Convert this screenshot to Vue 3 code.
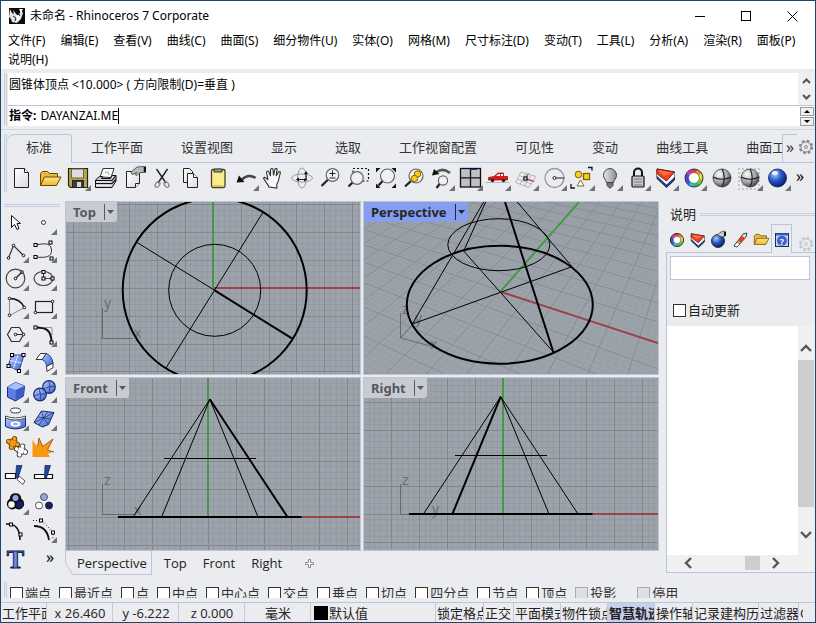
<script setup>
import { ref } from 'vue'

const menus = ['文件(F)', '编辑(E)', '查看(V)', '曲线(C)', '曲面(S)', '细分物件(U)', '实体(O)', '网格(M)', '尺寸标注(D)', '变动(T)', '工具(L)', '分析(A)', '渲染(R)', '面板(P)', '说明(H)']
const tabs = ['标准', '工作平面', '设置视图', '显示', '选取', '工作视窗配置', '可见性', '变动', '曲线工具', '曲面工具']
const command = ref('DAYANZAI.ME')
const helpQuery = ref('')
const autoUpdate = ref(false)

/* Icon artwork, drawn on a 28 x 28 cell */
const sq = (x, y) => `<rect x="${x - 1.5}" y="${y - 1.5}" width="3" height="3" fill="#fff" stroke="#000"/>`
const dot = (x, y) => `<circle cx="${x}" cy="${y}" r="1.3" fill="#fff" stroke="#111"/>`
const lens = (x, y, r, hx, hy) => `<path d="M${x - r * 0.7} ${y + r * 0.7}L${hx} ${hy}" stroke="#222" stroke-width="2.2"/><circle cx="${x}" cy="${y}" r="${r}" fill="#f0f1f4" stroke="#666" stroke-width="1.2"/>`
const wheelColors = ['#f03030', '#f58a20', '#f0e020', '#70d020', '#20c060', '#20c8d8', '#2060e0', '#7030d8', '#d030b8']
const wheel = (r, w) => wheelColors.map((c, i) => {
  const a = (i * 40 - 110) * Math.PI / 180
  const b = ((i + 1) * 40 - 108) * Math.PI / 180
  return `<path d="M${14 + r * Math.cos(a)} ${14 + r * Math.sin(a)}A${r} ${r} 0 0 1 ${14 + r * Math.cos(b)} ${14 + r * Math.sin(b)}" fill="none" stroke="${c}" stroke-width="${w}"/>`
}).join('') + `<circle cx="14" cy="14" r="${r + w / 2}" fill="none" stroke="#333" stroke-width="1"/><circle cx="14" cy="14" r="${r - w / 2}" fill="#fff" stroke="#555" stroke-width=".7"/>`
const layers = '<path d="M5 5L22.500 8v8l-8 7.500L5 14.500z" fill="#1c4494" stroke="#1a1a2a"/><path d="M5 9.500l9.500 7.500L22.500 8v5l-8 7.500L5 12z" fill="#f6f8ff"/><path d="M5 5L22.500 8l-8 9L5 10z" fill="#f04418" stroke="#7a1808" stroke-width=".8"/><path d="M6 6l14 2.500-8 3.500z" fill="#ff7040"/>'
const sphere = '<circle cx="14" cy="14" r="9" fill="url(#grayBall)" stroke="#444" stroke-width=".8"/><path d="M14 5c3 5 3 13 0 18M5 13c5 3 13 3 18 0" fill="none" stroke="#222" stroke-width="1.200"/>'
const folder = '<path d="M4.500 21.500v-12l2-2h5l2 2h8v4" fill="#e8b93a" stroke="#6b4a00"/><path d="M4.500 21.500l4-8.500h16.500l-4.500 8.500z" fill="url(#gold)" stroke="#6b4a00"/>'
const puzzle = (x, y, fill, line) => {
  const knobs = [[0, -4.5], [4.5, 0], [0, 4.5], [-4.5, 0]].map(([a, b]) => `<circle cx="${a}" cy="${b}" r="1.9"/>`).join('')
  return `<g transform="translate(${x} ${y}) rotate(20)" fill="${fill}"><g stroke="${line}" stroke-width="1.6">${knobs}<rect x="-2.800" y="-2.800" width="5.600" height="5.600"/></g>${knobs}<rect x="-2.800" y="-2.800" width="5.600" height="5.600"/></g>`
}
const tip = '<path d="M27 21v6h-6z" fill="#70747a"/>'

const art = {
  new: '<path d="M6.500 4.500h10l4 4v15h-14z" fill="url(#paper)" stroke="#222"/><path d="M16.500 4.500v4h4" fill="#fff" stroke="#222"/>',
  open: folder,
  save: '<path d="M4.500 4.500h19v19h-17l-2-2z" fill="#b9a654" stroke="#2a2508" stroke-width="1.200"/><rect x="7.500" y="5" width="12" height="9" fill="#dcdde2" stroke="#6f6535"/><rect x="8.500" y="16.500" width="11" height="7" fill="#3c3c3c" stroke="#222"/><rect x="13" y="18" width="4" height="5" fill="#d7d7dc"/>',
  print: '<path d="M8 13l3-8.500h11l-3 9z" fill="#fafafa" stroke="#333"/><path d="M13 9q3-3 4 2" stroke="#999" fill="none"/><path d="M3.500 16l4-3.500h3l-1 2h9l1.500-3h4v5.500l-4 6.500H3.500z" fill="#c8c9cd" stroke="#111"/><path d="M3.500 16.500h16.500l4-5M3.500 19.500h16.500l4-4" fill="none" stroke="#111" stroke-width="1.200"/><path d="M4 18h15M4 21.500h15" stroke="#eee"/>',
  props: '<path d="M6.500 7.500h13v12l-4 4h-9z" fill="url(#paper)" stroke="#222"/><path d="M19.500 19.500h-4v4" fill="#fff" stroke="#222"/><path d="M11 8l6-5 7-.5v6h-4l-3 3-2-1 2-2-5 2z" fill="#b9babd" stroke="#444" stroke-width=".8"/><path d="M24 2.500h2v6h-2z" fill="#111"/>',
  cut: '<path d="M8.500 5L18 19M19.500 5L10 19" stroke="#222" stroke-width="1.400"/><ellipse cx="9.500" cy="20.500" rx="2" ry="3" transform="rotate(35 9.500 20.500)" fill="none" stroke="#888" stroke-width="1.300"/><ellipse cx="18.500" cy="20.500" rx="2" ry="3" transform="rotate(-35 18.500 20.500)" fill="none" stroke="#888" stroke-width="1.300"/>',
  copy: '<path d="M7.500 4.500h6l3 3v11h-9z" fill="url(#paper)" stroke="#222"/><path d="M11.500 9.500h6l4 4v10h-10z" fill="url(#paper)" stroke="#222"/><path d="M17.500 9.500v4h4" fill="#fff" stroke="#222"/>',
  paste: '<rect x="7.500" y="5.500" width="13.500" height="18" rx="1.500" fill="#f8ec8c" stroke="#4c4210" stroke-width="1.300"/><path d="M10 5h8v3h-8z" fill="#9c9ca0" stroke="#333"/><path d="M9 21.500h10" stroke="#d8c860"/>',
  undo: '<path d="M9 16.500Q16 9 23.500 14" fill="none" stroke="#444" stroke-width="2.600"/><path d="M4.500 18.500L7 11.500l5.500 6.500z" fill="#111"/>',
  pan: '<path d="M9 23c-1-3-5-7-5.500-9 1-1.500 3 0 4.500 2L6.500 8c1-1.500 2-1 2.500 0l1.500 4V5.500c1-1.500 2.500-1 2.500 0l.5 6 1.500-6.500c1-1 2.500-.5 2 .7L16.200 12 18.500 8c1.200-1 2.200 0 1.800 1.200-1.500 4-1 8-3.500 11V24z" fill="#f7f7f9" stroke="#333" stroke-width="1.100"/>',
  rotate: '<ellipse cx="14" cy="14" rx="10.500" ry="4" fill="none" stroke="#999"/><ellipse cx="14" cy="14" rx="4.500" ry="10" fill="none" stroke="#999"/><path d="M10 15.500h6M18 9.500v6" stroke="#222" stroke-width="1.200"/><path d="M16 10l2-3 2 3zM11 13.500v4l-3-2zM16 14.500l3.500 1-3.500 2z" fill="#111"/>',
  zoom: lens(16.5, 11, 6.3, 5.5, 22) + '<path d="M16.500 6.500v6M13.500 9.500h6M13.500 14h6" stroke="#222"/>',
  window: '<rect x="9" y="4.500" width="15.500" height="12.500" fill="none" stroke="#111" stroke-width="1.200" stroke-dasharray="2 2"/>' + lens(13, 14, 6.3, 4.5, 22.5),
  extents: '<path d="M4 8.500V4h4.500zM24 8.500V4h-4.500zM4 19.500V24h4.500zM24 19.500V24h-4.500z" fill="#111"/>' + lens(15.5, 12, 7, 6.5, 21.5),
  selected: lens(16, 12, 7, 5, 22.5) + '<circle cx="17.500" cy="10" r="3.200" fill="#f5d020" stroke="#7a6200"/><circle cx="14.500" cy="14.500" r="3.200" fill="#f5d020" stroke="#7a6200"/>',
  undoview: '<path d="M8 8.500Q15 3 22 9" fill="none" stroke="#555" stroke-width="2.800"/><path d="M4 11.500L6 5l5.500 5z" fill="#111"/>' + lens(15, 16.5, 4.6, 8.5, 24),
  viewports: '<rect x="4.500" y="4.500" width="20" height="18.500" fill="#bfc0c4" stroke="#111" stroke-width="1.300"/><path d="M14.500 4.500V23M4.500 13.800h20" stroke="#111" stroke-width="1.300"/><path d="M15 5.500h6" stroke="#2030d0"/>',
  car: '<path d="M1.500 18.500h24" stroke="#b8b9bc"/><path d="M4.500 16v-2.500l5.500-1 4-3.500h5.500v3.500h4V16z" fill="#e01818" stroke="#900" stroke-width=".7"/><path d="M12 12l2.500-2h1.500v2zM17 10h2v2h-2z" fill="#fff"/><circle cx="8.500" cy="16.500" r="1.700" fill="#222"/><circle cx="19.500" cy="16.500" r="1.700" fill="#222"/>',
  cplane: '<path d="M9 8l15 4.500M7 11.500L22 17M5 15l15 5M3.500 18.500L17 23.500M9 8L3.500 18.500M14 9.500L8 20.500M19 11l-6.500 11M24 12.500L17 23.500" stroke="#b4b6ba" fill="none"/><path d="M14 15l8 2.500" stroke="#d02020" stroke-width="1.200"/><path d="M14 14l2.500-4.500" stroke="#20a030" stroke-width="1.200"/><rect x="12" y="13" width="3" height="3" fill="#fff" stroke="#111" stroke-width="1.200"/>',
  circle: '<circle cx="14.500" cy="14" r="9.500" fill="none" stroke="#96989d" stroke-width="1.300"/><path d="M14.500 14h10" stroke="#222"/><circle cx="14.500" cy="14" r="1.500" fill="#fff" stroke="#222"/>',
  select: '<path d="M20 3.500h4v3M3 20v4h4" fill="none" stroke="#111" stroke-width="1.300"/><circle cx="10.500" cy="10.500" r="3.300" fill="#f5d020" stroke="#806000"/><rect x="15.500" y="9.500" width="6" height="6" fill="#f5d020" stroke="#806000" stroke-width="1.300"/><path d="M12.500 16l3.500 6H9z" fill="#fff" stroke="#8a6428"/>',
  bulb: '<path d="M14 4.500a6.800 6.800 0 0 0-6.500 7c0 3 2.500 4 3 7h7c.5-3 3-4 3-7a6.800 6.800 0 0 0-6.500-7z" fill="url(#metal)" stroke="#444"/><path d="M11 18.500h6v3l-3 3-3-3z" fill="#777" stroke="#333" stroke-width=".8"/>',
  lock: '<path d="M10 12V8.500a4 4 0 0 1 8 0V12" fill="none" stroke="#111" stroke-width="2"/><rect x="8" y="12" width="12" height="11" rx="1" fill="#c6c7ca" stroke="#111" stroke-width="1.200"/><path d="M10 15h8M10 18h8M10 21h8" stroke="#777"/>',
  layer: layers,
  color: wheel(7.2, 3.6),
  shaded: sphere,
  rendered: '<path d="M2 5h24M2 9h24M2 13h24M2 17h24M2 21h24M2 25h24" stroke="#c4c5ca" stroke-width="2" stroke-dasharray="2 2"/>' + sphere,
  blueball: '<circle cx="13.500" cy="14" r="9" fill="url(#blueBall)" stroke="#0a1c60" stroke-width=".8"/><ellipse cx="11" cy="9" rx="3" ry="2" fill="#e8f0ff"/>',
  /* side tools */
  pointer: '<path d="M9.500 7.500v12l3-3 2.500 5 2-1-2-5h3.500z" fill="#fff" stroke="#111"/>',
  point: '<circle cx="13.500" cy="14.500" r="2" fill="#fff" stroke="#333"/>',
  polyline: '<path d="M6.500 22L11.500 9.500l10 10" fill="none" stroke="#333" stroke-width="1.200"/>' + dot(6.5, 22) + dot(11.5, 9.5) + dot(21.5, 19.5),
  curve: '<path d="M5.500 9C16 7 21 7 21.500 14S16 22 5.500 21" fill="none" stroke="#333"/>' + sq(5.5, 9) + sq(20.5, 6.5) + sq(5.5, 21) + sq(21.5, 22.5),
  circ: '<circle cx="13.500" cy="14.500" r="9.300" fill="none" stroke="#444" stroke-width="1.200"/><path d="M13.500 14.500l6.500-6.500" stroke="#222" stroke-width="1.300"/>' + dot(13.5, 14.5) + dot(20, 8),
  ellipse: '<ellipse cx="13.500" cy="14.500" rx="9.500" ry="7" fill="none" stroke="#444" stroke-width="1.200"/><path d="M13.500 8v6.500H23" fill="none" stroke="#444"/>' + sq(13.5, 8) + sq(13.5, 14.5) + sq(22.5, 14.5),
  arc: '<path d="M7.500 6.500Q18 6.500 22.500 15.500L7.500 23.500z" fill="none" stroke="#888"/><path d="M7.500 6.500Q18 6.500 22.500 15.500" fill="none" stroke="#111" stroke-width="1.300"/>' + dot(7.5, 6.5) + dot(22.3, 15.5) + dot(7.5, 23.3),
  rect: '<rect x="5.500" y="9.500" width="17" height="11" fill="none" stroke="#222" stroke-width="1.200"/>' + dot(22.5, 9.5) + dot(5.5, 20.5),
  hexagon: '<path d="M5.500 14.500l4-7h8l4 7-4 7h-8z" fill="none" stroke="#333" stroke-width="1.200"/><path d="M13.500 14.500h8" stroke="#222"/>' + dot(13.5, 14.5) + dot(21.5, 14.5),
  fillet: '<path d="M14 7.500h8v8" fill="none" stroke="#999"/><path d="M5.500 7.500c10 0 16 2 16 15" fill="none" stroke="#111" stroke-width="2"/>' + sq(5.5, 7.5) + sq(21.5, 22.5),
  patch: '<path d="M10 7h12l-5 16-11-5z" fill="url(#blueFace)" stroke="#223c90"/><path d="M16 7l-4.500 13.500M8 12.500L19.500 15" stroke="#dfe8ff"/>' + sq(10, 7) + sq(21.5, 7) + sq(17, 23) + sq(6.5, 18),
  extrudesrf: '<path d="M6 11.500L10.500 5.500h6L12 11.500z" fill="#fff" stroke="#333"/><path d="M12 11.500l4.500-6Q22 8 23 15l-6.500 3.500Q16.500 13.500 12 11.500z" fill="url(#blueFace)" stroke="#223c90"/><path d="M16.500 18.500L23 15v4.500l-6 4z" fill="#fff" stroke="#333"/>',
  box: '<path d="M5.500 11l8-4.500 9 3.500-1 10-8 5-8-4z" fill="#5b80e0" stroke="#1a2f80"/><path d="M5.500 11l8-4.500 9 3.500-8.500 4z" fill="#a9bfff"/><path d="M14 14l-.5 11 8-5 1-10z" fill="#3a5cc4"/>',
  spheres: '<circle cx="19" cy="11" r="6.300" fill="url(#blueFace)" stroke="#142a70" stroke-width="1.200"/><circle cx="10" cy="18.500" r="6.300" fill="url(#blueFace)" stroke="#142a70" stroke-width="1.200"/><path d="M14 13q5-3 10.500-3M19 5q2 6 0 12M4 20q6-3 11-2M9 13q3 6 1 12" fill="none" stroke="#142a70" stroke-width=".7"/>',
  tube: '<ellipse cx="13.500" cy="6.500" rx="5" ry="2.500" fill="#fff" stroke="#333"/><path d="M3.500 12.500q10 4 20 0v10q-10 5-20 0z" fill="url(#blueFace)" stroke="#142a70"/><path d="M3.500 12q10 4 20 0v2q-10 4-20 0z" fill="#fff" stroke="#333" stroke-width=".8"/><ellipse cx="13.500" cy="20" rx="5" ry="2.800" fill="#fff"/><ellipse cx="13.500" cy="20" rx="2.500" ry="1.200" fill="#90a8f0"/>',
  mesh: '<path d="M4 18.500L11.500 7l12.500 1.500-5.500 12-6 2.500z" fill="url(#blueFace)" stroke="#142a70"/><path d="M8 13l13 2M17.500 8L9 21M4 18.500l9.500-4.500 10.500-5.500M11.500 7l2 7 5 6.500" fill="none" stroke="#142a70" stroke-width=".7"/>',
  join: puzzle(11, 11, '#f59a10', '#6a3c00') + puzzle(19, 18.5, '#fff', '#333'),
  explode: '<path d="M2.500 25V8l5 7 1.500-9 4 8.500L23 7l-5.500 11 6.500 2-6 1.500 2 3.500z" fill="#f79a10"/><path d="M7.500 14.500l1.500-8.500 3.500 8.500L23 7l-5.500 11 6.500 2" fill="none" stroke="#9a4408" stroke-width=".8"/>',
  trim: '<path d="M3.500 13.500h10v5h-10z" fill="#fff" stroke="#111" stroke-width="1.200"/><path d="M17 16l6 5-2 3.500-6-5z" fill="#fff" stroke="#555"/><path d="M14.500 5.500h5.500l-4 12.500h-2.500z" fill="#24489c" stroke="#0b1c50" stroke-width=".7"/>',
  split: '<path d="M4.500 14.500h18v4h-18z" fill="#fff" stroke="#111" stroke-width="1.200"/><path d="M15 5.500h5.500l-4 12.500h-2z" fill="#24489c" stroke="#0b1c50" stroke-width=".7"/>',
  group: '<path d="M13.500 6c4 0 5 3 5 5 3 2 3.500 5 2 7.500-2 3-5 2.500-7 1-2 1.500-5 2-7-1-1.500-2.500-1-5.500 2-7.500 0-2 1-5 5-5z" fill="#111" stroke="#111" stroke-width="1.500"/><circle cx="13.500" cy="10" r="3" fill="#92a6e8"/><circle cx="9.500" cy="16.500" r="3.200" fill="#fff"/><circle cx="17.500" cy="16.500" r="3.200" fill="#141c74"/>',
  ungroup: '<circle cx="14" cy="9" r="3.500" fill="#92a6e8" stroke="#555"/><circle cx="9" cy="17.500" r="3.500" fill="#fff" stroke="#555"/><circle cx="19" cy="17.500" r="3.500" fill="#141c74" stroke="#222"/>',
  controlpts: '<path d="M4 8q14-1 14 16" fill="none" stroke="#111" stroke-width="1.600"/>' + sq(9, 8.5) + sq(18.5, 18.5),
  editpts: '<path d="M4 10q13 0 15 14" fill="none" stroke="#111" stroke-width="1.800"/><path d="M3 4.500h9l11 12v6" fill="none" stroke="#111" stroke-dasharray="1 2"/>' + sq(11, 4.5) + sq(23, 16.5),
  text: '<text x="13.500" y="24" text-anchor="middle" font-family="Liberation Serif, serif" font-weight="700" font-size="26" fill="#6c88e8" stroke="#10204c">T</text>',
  /* panel tabs */
  pcolor: wheel(5.2, 2.8),
  player: `<g transform="translate(3.500 4) scale(.75)">${layers}</g>`,
  pball: '<circle cx="13" cy="15" r="6.500" fill="url(#blueBall)" stroke="#334"/><path d="M12 9l4-3 4-1v5l-3 1z" fill="#ccc" stroke="#444" stroke-width=".8"/><path d="M19 6h2v4h-2z" fill="#111"/>',
  pbrush: '<path d="M8 20l9-12 4-1-1 4-9 10z" fill="#ddd" stroke="#444"/><path d="M12 15l4-5 3 2-4 5z" fill="#e04018"/><path d="M8 20l3-4 3 2-3 3z" fill="#fff" stroke="#444" stroke-width=".8"/>',
  pfolder: `<g transform="translate(4 3) scale(.72)">${folder}</g>`,
  phelp: '<rect x="7.500" y="7.500" width="13" height="13" fill="#c4d0f0" stroke="#1b2c60"/><path d="M8 8.500h12" stroke="#3c62d0" stroke-width="2"/><circle cx="14" cy="14.800" r="5" fill="#3c62d0"/><text x="14" y="18.500" text-anchor="middle" font-family="Open Sans, sans-serif" font-size="9" font-weight="700" fill="#fff">?</text>',
}
const plain = new Set(['new', 'open', 'print', 'props', 'cut', 'copy', 'paste', 'pan', 'rotate', 'zoom', 'window', 'extents', 'selected', 'shaded', 'pointer', 'join', 'explode', 'trim', 'split', 'ungroup', 'controlpts', 'text'])
const draw = (name) => art[name] + (plain.has(name) ? '' : tip)

const toolbar = ['new', 'open', 'save', 'print', 'props', 'cut', 'copy', 'paste', 'undo', 'pan', 'rotate', 'zoom', 'window', 'extents', 'selected', 'undoview', 'viewports', 'car', 'cplane', 'circle', 'select', 'bulb', 'lock', 'layer', 'color', 'shaded', 'rendered', 'blueball']
const sideTools = ['pointer', 'point', 'polyline', 'curve', 'circ', 'ellipse', 'arc', 'rect', 'hexagon', 'fillet', 'patch', 'extrudesrf', 'box', 'spheres', 'tube', 'mesh', 'join', 'explode', 'trim', 'split', 'group', 'ungroup', 'controlpts', 'editpts', 'text']
const panelTabs = ['pcolor', 'player', 'pball', 'pbrush', 'pfolder', 'phelp']

/* Construction-plane grids */
const MAJOR = 27.9
function flatGrid(ox, oy) {
  let minor = ''
  let major = ''
  for (let i = -150; i <= 150; i++) {
    const x = Math.round(ox + i * MAJOR / 5) + 0.5
    const y = Math.round(oy + i * MAJOR / 5) + 0.5
    const seg = `M${x} 0V900M0 ${y}H1600`
    if (i % 5 === 0) major += seg
    else minor += seg
  }
  return { minor, major }
}

/* Projective map of the ground plane from four plane/screen pairs */
function homography(pairs) {
  const m = []
  for (const [u, v, x, y] of pairs) {
    m.push([u, v, 1, 0, 0, 0, -u * x, -v * x, x])
    m.push([0, 0, 0, u, v, 1, -u * y, -v * y, y])
  }
  for (let c = 0; c < 8; c++) {
    let p = c
    for (let r = c + 1; r < 8; r++) if (Math.abs(m[r][c]) > Math.abs(m[p][c])) p = r
    ;[m[c], m[p]] = [m[p], m[c]]
    for (let r = 0; r < 8; r++) {
      if (r === c) continue
      const f = m[r][c] / m[c][c]
      for (let k = c; k < 9; k++) m[r][k] -= f * m[c][k]
    }
  }
  return m.map((row, i) => row[8] / row[i])
}
const H = homography([
  [-2.73, 1.64, 99.7, 49],
  [2.84, -1.82, 189.3, 150],
  [1.79, 2.71, 208, 64.7],
  [-1.68, -2.87, 48.3, 122],
])
const depth = (u, v) => H[6] * u + H[7] * v + 1
function project(u, v) {
  const w = depth(u, v)
  return `${((H[0] * u + H[1] * v + H[2]) / w).toFixed(1)} ${((H[3] * u + H[4] * v + H[5]) / w).toFixed(1)}`
}
function planeLine(u0, v0, u1, v1) {
  const near = 0.2
  const a = depth(u0, v0)
  const b = depth(u1, v1)
  if (a < near && b < near) return ''
  const t = (near - a) / (b - a)
  const mid = [u0 + (u1 - u0) * t, v0 + (v1 - v0) * t]
  const p = a < near ? mid : [u0, v0]
  const q = b < near ? mid : [u1, v1]
  return `M${project(...p)}L${project(...q)}`
}
function perspectiveGrid() {
  let minor = ''
  let major = ''
  for (let i = -100; i <= 100; i++) {
    const k = i / 5
    const seg = planeLine(k, -20, k, 20) + planeLine(-20, k, 20, k)
    if (i % 5 === 0) major += seg
    else minor += seg
  }
  return { minor, major }
}

const views = [
  {
    name: 'Top', grid: flatGrid(146.7, 85.7), green: 'M147 86V0', red: 'M147 86H1600',
    thin: 'M70.700 40.300L148.700 88.300M197 10.300L100 166M102.700 88.300a46 46 0 1 0 92 0a46 46 0 1 0-92 0',
    thick: 'M56.700 88.300a92 92 0 1 0 184 0a92 92 0 1 0-184 0M148.700 88.300L226.300 136.700',
    axes: 'M36.500 106v30.500h30', letters: [['y', 38, 106], ['x', 68, 136]],
  },
  {
    name: 'Perspective', active: true, grid: perspectiveGrid(), green: 'M136.300 89.700L215 0', red: 'M136.300 89.700L294 141L900 338',
    thin: 'M48.300 122L208 64.700L153.300 0M99.700 49L189.300 150M48.300 122L119.700 0M99.700 49L121.700 0M83.800 42.700a51 26 0 1 0 102 0a51 26 0 1 0-102 0',
    thick: 'M42.800 102.700a93 59 0 1 0 186 0a93 59 0 1 0-186 0M141 0L189.300 150',
    axes: 'M36.500 111v25l16-18M36.500 136l30 8', letters: [['z', 38, 112], ['y', 51, 121], ['x', 66, 147]],
  },
  {
    name: 'Front', grid: flatGrid(141.7, 138.7), green: 'M142 139V0', red: 'M142 139H1600',
    thin: 'M67 139L143.800 21.300L95.600 139M143.800 21.300L192 139M98 80.500h92',
    thick: 'M143.800 21.300L221.500 139M52 139h183.500',
    axes: 'M36.500 106v30.500h31', letters: [['z', 38, 107], ['x', 68, 137]],
  },
  {
    name: 'Right', grid: flatGrid(138.7, 135.7), green: 'M139 136V0', red: 'M139 136H1600',
    thin: 'M59.400 136L136.700 18.700L185 136M136.700 18.700L214 136M91 77.500h92',
    thick: 'M136.700 18.700L88.400 136M45 136h183.500',
    axes: 'M36.500 106v30.500h31', letters: [['z', 38, 107], ['y', 68, 136]],
  },
]
const viewTabs = ['Perspective', 'Top', 'Front', 'Right']

const snaps = ['端点', '最近点', '点', '中点', '中心点', '交点', '垂点', '切点', '四分点', '节点', '顶点', '投影', '停用']
const isOff = (s) => s === '投影' || s === '停用'

const status = [
  { t: '工作平面', w: 46 }, { t: 'x 26.460', w: 66, mid: true }, { t: 'y -6.222', w: 66, mid: true }, { t: 'z 0.000', w: 66, mid: true },
  { t: '毫米', w: 66, mid: true }, { t: '默认值', swatch: true, grow: true },
  { t: '锁定格点', w: 48 }, { t: '正交', w: 30 }, { t: '平面模式', w: 47 }, { t: '物件锁点', w: 47 },
  { t: '智慧轨迹', w: 47, on: true }, { t: '操作轴', w: 38 }, { t: '记录建构历史', w: 66 }, { t: '过滤器', w: 40 }, { t: 'CPU', w: 4 },
]
</script>

<template>
  <div class="app">
    <svg class="defs" width="0" height="0" aria-hidden="true">
      <defs>
        <linearGradient id="paper" x1="0" y1="0" x2="1" y2="1"><stop offset="0" stop-color="#fff" /><stop offset="1" stop-color="#d9dadf" /></linearGradient>
        <linearGradient id="gold" x1="0" y1="0" x2="0" y2="1"><stop offset="0" stop-color="#ffe88a" /><stop offset="1" stop-color="#f0b428" /></linearGradient>
        <linearGradient id="metal" x1="0" y1="0" x2="1" y2="0"><stop offset="0" stop-color="#e8e8ea" /><stop offset="1" stop-color="#8c8d90" /></linearGradient>
        <linearGradient id="blueFace" x1="0" y1="0" x2="1" y2="1"><stop offset="0" stop-color="#b8caff" /><stop offset="1" stop-color="#3c64cc" /></linearGradient>
        <radialGradient id="grayBall" cx=".35" cy=".3" r=".75"><stop offset="0" stop-color="#fff" /><stop offset=".6" stop-color="#a0a2a6" /><stop offset="1" stop-color="#3c3d40" /></radialGradient>
        <radialGradient id="blueBall" cx=".35" cy=".3" r=".75"><stop offset="0" stop-color="#a8ccff" /><stop offset=".5" stop-color="#2454c8" /><stop offset="1" stop-color="#061a60" /></radialGradient>
      </defs>
    </svg>

    <header class="titlebar">
      <svg class="logo" width="16" height="16" viewBox="0 0 16 16" aria-hidden="true">
        <rect width="16" height="16" fill="#0a0a0a" />
        <path d="M1 1l2 4 2 1-1-4 4 5 2 0 2-5 2 3-2 6-4 4-5-1-1-3-2-2z" fill="#e4e4e4" />
        <path d="M7 8l3-1 1 4-3 2zM10 1l4 0-2 4z" fill="#fff" /><path d="M4 8l3 2-1 3M9 5l2 3" fill="none" stroke="#222" />
        <path d="M12 11l4-3v8h-6z" fill="#0a0a0a" />
      </svg>
      <h1>未命名 - Rhinoceros 7 Corporate</h1>
      <div class="winctl">
        <button aria-label="最小化"><svg width="11" height="11"><path d="M0 5.500h10" stroke="#000" /></svg></button>
        <button aria-label="最大化"><svg width="11" height="11"><rect x=".5" y=".5" width="9" height="9" fill="none" stroke="#000" /></svg></button>
        <button aria-label="关闭"><svg width="11" height="11"><path d="M.5 .5l10 10M10.500 .5l-10 10" stroke="#000" /></svg></button>
      </div>
    </header>

    <nav class="menubar"><button v-for="m in menus" :key="m">{{ m }}</button></nav>

    <section class="commands">
      <div class="grip"></div>
      <div class="lines">
        <div class="history">
          <p>圆锥体顶点 &lt;10.000&gt; ( 方向限制(D)=垂直 )</p>
          <div class="steps">
            <button aria-label="向上"><svg width="9" height="6"><path d="M1 5l3.500-3.500L8 5" fill="none" stroke="#505357" stroke-width="2" /></svg></button>
            <button aria-label="向下"><svg width="9" height="6"><path d="M1 1l3.500 3.500L8 1" fill="none" stroke="#505357" stroke-width="2" /></svg></button>
          </div>
        </div>
        <div class="prompt">
          <label for="cmd">指令:</label>
          <input id="cmd" v-model="command" type="text" spellcheck="false"><i class="caret"></i>
          <div class="spin">
            <button aria-label="上一条"><svg width="6" height="3"><path d="M0 3l3-3 3 3z" /></svg></button>
            <button aria-label="下一条"><svg width="6" height="3"><path d="M0 0l3 3 3-3z" /></svg></button>
          </div>
        </div>
      </div>
    </section>

    <section class="ribbon">
      <div class="grip"></div>
      <div class="ribbon-body">
        <div class="tabs">
          <div class="tablist">
            <button v-for="(t, i) in tabs" :key="t" :class="{ active: i === 0 }">{{ t }}</button>
          </div>
          <button class="more">»</button>
          <button class="gear" aria-label="选项">
            <svg width="16" height="16" viewBox="0 0 16 16"><circle cx="8" cy="8" r="6" fill="none" stroke="#85878c" stroke-width="2.400" stroke-dasharray="2.700 2" /><circle cx="8" cy="8" r="5" fill="#ebecf0" stroke="#85878c" /><circle cx="8" cy="8" r="1.500" fill="none" stroke="#85878c" /></svg>
          </button>
        </div>
        <div class="toolbar">
          <button v-for="n in toolbar" :key="n" :aria-label="n"><svg width="28" height="28" viewBox="0 0 28 28" v-html="draw(n)"></svg></button>
          <button class="more-tools">»</button>
        </div>
      </div>
    </section>

    <main class="main">
      <aside class="side">
        <div class="hgrip"></div>
        <div class="side-grid">
          <button v-for="n in sideTools" :key="n" :aria-label="n"><svg width="28" height="28" viewBox="0 0 28 28" v-html="draw(n)"></svg></button>
          <button class="more-tools">»</button>
        </div>
      </aside>

      <section class="work">
        <div class="viewports">
          <div v-for="v in views" :key="v.name" class="viewport">
            <svg class="scene" width="100%" height="100%">
              <path :d="v.grid.minor" class="minor" :class="{ soft: v.active }" />
              <path :d="v.grid.major" class="major" :class="{ soft: v.active }" />
              <path :d="v.red" class="red" />
              <path :d="v.green" class="green" />
              <path :d="v.axes" class="axes" />
              <text v-for="l in v.letters" :key="l[0]" :x="l[1]" :y="l[2]">{{ l[0] }}</text>
              <path :d="v.thin" class="thin" />
              <path :d="v.thick" class="thick" />
            </svg>
            <button class="vtitle" :class="{ active: v.active }">
              <span>{{ v.name }}</span>
              <svg width="9" height="16"><path d="M.5 0v16" stroke="currentColor" /></svg>
              <svg class="drop" width="7" height="4"><path d="M0 0h7l-3.500 4z" fill="currentColor" /></svg>
            </button>
          </div>
        </div>
        <div class="viewtabs">
          <button v-for="(t, i) in viewTabs" :key="t" :class="{ active: i === 0 }">
            <svg v-if="i === 0" class="slant" width="8" height="24"><path d="M.5 0v12l7 11.500" fill="none" stroke="#bcc4dc" /></svg>{{ t }}
          </button>
          <button class="add" aria-label="新增"><svg width="9" height="9"><path d="M3.500 .5h2v3h3v2h-3v3h-2v-3h-3v-2h3z" fill="#fff" stroke="#888b90" /></svg></button>
        </div>
      </section>

      <aside class="panel">
        <div class="phead"><h2>说明</h2><div class="hgrip"></div></div>
        <div class="ptabs">
          <button v-for="n in panelTabs" :key="n" :aria-label="n" :class="{ active: n === 'phelp' }"><svg width="28" height="28" viewBox="0 0 28 28" v-html="art[n]"></svg></button>
          <svg class="pgear" width="16" height="16" viewBox="0 0 16 16"><circle cx="8" cy="8" r="6" fill="none" stroke="#c3c8d4" stroke-width="2.400" stroke-dasharray="2.700 2" /><circle cx="8" cy="8" r="5" fill="#ebecf0" stroke="#c3c8d4" /><circle cx="8" cy="8" r="1.500" fill="none" stroke="#c3c8d4" /></svg>
        </div>
        <div class="pbody">
          <input v-model="helpQuery" class="query" type="text" aria-label="搜索">
          <label class="auto"><input v-model="autoUpdate" type="checkbox">自动更新</label>
          <div class="browser">
            <div class="paper"></div>
            <div class="vscroll">
              <button aria-label="向上滚动"><svg width="12" height="8"><path d="M1 7l5-5 5 5" fill="none" stroke="#55585c" stroke-width="2.400" /></svg></button>
              <div class="vthumb"></div>
              <button aria-label="向下滚动"><svg width="12" height="8"><path d="M1 1l5 5 5-5" fill="none" stroke="#55585c" stroke-width="2.400" /></svg></button>
            </div>
            <div class="hscroll">
              <button aria-label="向左滚动"><svg width="8" height="12"><path d="M7 1L2 6l5 5" fill="none" stroke="#55585c" stroke-width="2.400" /></svg></button>
              <div class="hthumb"></div>
              <button aria-label="向右滚动"><svg width="8" height="12"><path d="M1 1l5 5-5 5" fill="none" stroke="#55585c" stroke-width="2.400" /></svg></button>
            </div>
          </div>
        </div>
      </aside>
    </main>

    <section class="snaps">
      <div class="grip"></div>
      <div class="snaplist">
        <label v-for="s in snaps" :key="s" :class="{ off: isOff(s) }"><input type="checkbox" :disabled="isOff(s)">{{ s }}</label>
      </div>
    </section>

    <footer class="status">
      <div v-for="c in status" :key="c.t" class="cell" :class="{ mid: c.mid, on: c.on, grow: c.grow }" :style="c.w ? { width: c.w + 'px' } : null">
        <i v-if="c.swatch" class="swatch"></i>{{ c.t }}
      </div>
    </footer>
  </div>
</template>

<style>
body {
  background: #ebecf0;
}
</style>

<style scoped>
.app {
  box-sizing: border-box;
  min-height: 100vh;
  display: flex;
  flex-direction: column;
  border: 1px solid #1d4668;
  background: #ebecf0;
  color: #000;
  font: 12px/16px "Noto Sans", "Noto Sans CJK SC", sans-serif;
  overflow: hidden;
}
.app * {
  box-sizing: border-box;
}
.defs {
  position: absolute;
}
button {
  font: inherit;
  color: inherit;
  background: none;
  border: 0;
  padding: 0;
  margin: 0;
  display: flex;
  align-items: center;
  justify-content: center;
  white-space: nowrap;
}
h1, h2, p {
  margin: 0;
  font: inherit;
}
svg {
  display: block;
  flex: none;
}

.titlebar {
  height: 30px;
  display: flex;
  align-items: center;
  padding-left: 8px;
  gap: 5px;
  background: #fff;
}
.winctl {
  margin-left: auto;
  display: flex;
}
.winctl button {
  width: 46px;
  height: 30px;
}
.menubar {
  display: flex;
  flex-wrap: wrap;
  column-gap: 1px;
  background: #fff;
  height: 38px;
  flex: none;
}
.menubar button {
  height: 19px;
  padding: 0 7px;
}

.grip {
  width: 3px;
  flex: none;
  border: solid #c4cee4;
  border-width: 0 1px;
}
.hgrip {
  height: 3px;
  border: solid #c4cee4;
  border-width: 1px 0;
}
.commands {
  display: flex;
  gap: 1px;
  padding: 4px 1px 3px 3px;
  border-bottom: 1px solid #d0d6e4;
}
.lines {
  flex: 1;
  min-width: 0;
}
.history {
  display: flex;
  justify-content: space-between;
  height: 33px;
  background: #fff;
  border-bottom: 1px solid #b9c5da;
}
.history p {
  padding: 4px 1px;
}
.steps {
  width: 16px;
  background: #f0f0f0;
}
.steps button {
  width: 16px;
  height: 16px;
}
.prompt {
  display: flex;
  align-items: center;
  height: 20px;
  background: #fff;
  padding-left: 1px;
}
.prompt label {
  font-weight: 700;
  margin-right: 4px;
}
.prompt input {
  field-sizing: content;
  border: 0;
  padding: 0;
  margin: 0;
  outline: 0;
  background: none;
  font: inherit;
}
.caret {
  width: 1px;
  height: 16px;
  background: #000;
}
.spin {
  margin-left: auto;
  display: grid;
  gap: 1px;
}
.spin button {
  width: 14px;
  height: 9px;
  background: #f0f0f0;
  border: 1px solid #9a9da2;
}

.ribbon {
  display: flex;
  padding: 4px 1px 9px 3px;
}
.ribbon-body {
  flex: 1;
  min-width: 0;
}
.tabs {
  display: flex;
  height: 29px;
  border-bottom: 1px solid #b9c5dd;
  font-size: 13px;
  color: #333;
}
.tablist {
  display: flex;
  flex: 1;
  min-width: 0;
  overflow: hidden;
  height: 29px;
}
.tablist button {
  flex: none;
  padding: 0 19px 3px;
}
.tablist .active {
  background: #ebecf0;
  border: solid #b9c5dd;
  border-width: 1px 1px 0 0;
  border-radius: 8px 3px 0 0;
  padding-bottom: 4px;
}
.more {
  width: 15px;
  border-left: 1px solid #b9c5dd;
  border-top: 1px solid #b9c5dd;
  font-size: 16px;
  padding-bottom: 3px;
}
.gear {
  width: 17px;
  padding-bottom: 2px;
}
.toolbar {
  display: flex;
  padding: 1px 0 0 1px;
  height: 29px;
  overflow: hidden;
}
.toolbar button {
  flex: none;
  width: 28px;
  height: 28px;
}
.toolbar .more-tools {
  width: 16px;
}
.more-tools {
  font-size: 16px;
  padding-bottom: 4px;
}

.main {
  flex: 1;
  display: flex;
  min-height: 376px;
}
.side {
  width: 64px;
  flex: none;
  padding-top: 3px;
}
.side .hgrip {
  margin: 0 5px 1px 3px;
}
.side-grid {
  display: grid;
  grid-template-columns: 28px 28px;
  padding-left: 1px;
}
.side-grid button {
  height: 28px;
}
.side-grid .more-tools {
  padding: 0 0 3px 12px;
}
.work {
  flex: 1;
  min-width: 0;
  display: flex;
  flex-direction: column;
}
.viewports {
  flex: 1;
  display: grid;
  grid-template: 1fr 1fr / 1fr 1fr;
  gap: 2px;
}
.viewport {
  position: relative;
  border: 1px solid #bcc4d6;
  background: #9da3ab;
  overflow: hidden;
}
.scene {
  position: absolute;
  inset: 0;
  fill: none;
}
.scene text {
  fill: #6a6e74;
  font: 14px "Noto Sans", sans-serif;
}
.minor {
  stroke: #949aa3;
}
.major {
  stroke: #83878f;
}
.minor.soft {
  stroke-width: 0.6;
}
.major.soft {
  stroke: #888d95;
}
.red {
  stroke: #9c4248;
  stroke-width: 2;
}
.green {
  stroke: #439a44;
  stroke-width: 2;
}
.axes {
  stroke: #666a70;
}
.thin {
  stroke: #000;
}
.thick {
  stroke: #000;
  stroke-width: 2;
}
.vtitle {
  position: relative;
  height: 20px;
  padding: 0 3px 0 7px;
  gap: 8px;
  background: #c8ccd2;
  color: #55585c;
  font: 700 13px/20px "Noto Sans", sans-serif;
  border-bottom-right-radius: 3px;
}
.vtitle .drop {
  margin-left: -14px;
}
.vtitle.active {
  background: #869eee;
  color: #24262c;
}
.viewtabs {
  display: flex;
  height: 26px;
  font: 13px/18px "Open Sans", sans-serif;
  color: #222;
}
.viewtabs button {
  height: 24px;
  padding: 0 8px;
}
.viewtabs .active {
  position: relative;
  border: solid #bcc4dc;
  border-width: 0 1px 1px 0;
  border-image: linear-gradient(90deg, transparent 8px, #bcc4dc 8px) 1;
  padding: 0 4px 0 12px;
  margin-right: 4px;
}
.viewtabs .add {
  padding-left: 15px;
}
.slant {
  position: absolute;
  left: 0;
  top: 0;
}

.panel {
  width: 149px;
  flex: none;
  margin-left: 7px;
  padding: 4px 0;
  display: flex;
  flex-direction: column;
}
.phead {
  display: flex;
  align-items: center;
  gap: 4px;
  height: 18px;
  padding-left: 4px;
  font-size: 13px;
  color: #222;
}
.phead .hgrip {
  flex: 1;
}
.ptabs {
  display: flex;
  height: 30px;
  padding: 1px 1px 0 0;
  background: linear-gradient(#b9c5dd, #b9c5dd) 0 100% / 100% 1px no-repeat;
}
.ptabs button {
  width: 21px;
  overflow: hidden;
}
.ptabs button svg {
  margin: 2px -4px 0;
}
.ptabs .active {
  border: solid #b9c5dd;
  border-width: 1px 1px 0;
  background: #ebecf0;
}
.pgear {
  margin: 12px 0 0 auto;
}
.pbody {
  flex: 1;
  display: flex;
  flex-direction: column;
  padding: 3px 1px 0 0;
  border: solid #b9c5dd;
  border-width: 0 0 1px 1px;
}
.query {
  height: 24px;
  margin: 0 4px 0 3px;
  border: 1px solid #b9c5dd;
  background: #fff;
  outline: 0;
}
.auto {
  display: flex;
  align-items: center;
  gap: 2px;
  margin: 20px 4px 0 6px;
  height: 20px;
  font-size: 13px;
  color: #222;
}
input[type="checkbox"] {
  appearance: none;
  margin: 0;
  width: 13px;
  height: 13px;
  flex: none;
  border: 1px solid #333;
  background: #fff;
}
.browser {
  flex: 1;
  margin-top: 6px;
  display: grid;
  grid-template: 1fr 17px / 1fr 16px;
  background: #f0f0f0;
}
.paper {
  background: #fff;
}
.vscroll {
  display: flex;
  flex-direction: column;
}
.vscroll button {
  height: 34px;
  padding-top: 10px;
}
.vthumb {
  height: 64%;
  margin-bottom: auto;
  background: #cdcdcd;
}
.vscroll button:last-child {
  padding: 0 0 6px;
}
.hscroll {
  grid-column: 1 / -1;
  display: flex;
  padding: 1px 33px 2px 16px;
}
.hscroll button {
  width: 10px;
}
.hthumb {
  width: 15px;
  margin: 0 11px 0 auto;
  background: #cdcdcd;
}

.snaps {
  display: flex;
  gap: 2px;
  padding: 5px 0 4px 3px;
}
.snaplist {
  display: flex;
  align-items: flex-start;
  margin-top: 5px;
  height: 11px;
  overflow: hidden;
  font-size: 13px;
  line-height: 13px;
  color: #333;
}
.snaplist label {
  display: flex;
  gap: 2px;
  padding: 0 7px 0 1px;
  white-space: nowrap;
}
.snaplist .off {
  padding-right: 20px;
}
.snaplist .off input {
  background: #dedfe2;
  border-color: #a8aaae;
}
.status {
  display: flex;
  height: 20px;
  border-top: 1px solid #b9c5dd;
  font: 13px/20px "Open Sans", "Noto Sans CJK SC", sans-serif;
  color: #222;
}
.cell {
  display: flex;
  flex: none;
  align-items: center;
  overflow: hidden;
  white-space: nowrap;
  border-right: 1px solid #c2cadc;
  padding-left: 1px;
}
.cell.mid {
  justify-content: center;
}
.cell.grow {
  flex: 1;
}
.cell.on {
  background: #c5d0ec;
  font-weight: 700;
}
.cell:last-child {
  border: 0;
  margin-right: 12px;
}
.swatch {
  width: 14px;
  height: 14px;
  margin: 0 1px 0 2px;
  background: #000;
}
</style>
